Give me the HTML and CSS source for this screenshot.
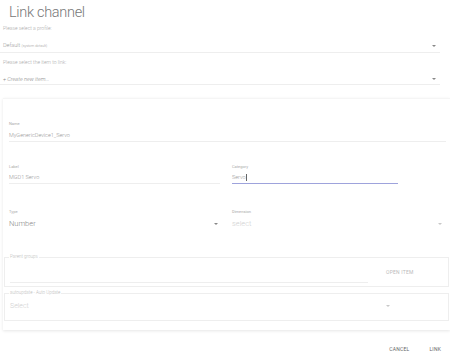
FILE: index.html
```html
<!DOCTYPE html>
<html>
<head>
  <meta charset="UTF-8">
  <title>Link channel</title>
  <link rel="stylesheet" href="styles.css">
</head>
<body>
  <div class="page">
    <h1 class="title">Link channel</h1>

    <div class="hint">Please select a profile:</div>
    <div class="select select-profile">
      <span class="select-value">Default <small>(system default)</small></span>
      <span class="arrow"></span>
    </div>

    <div class="hint hint-item">Please select the item to link:</div>
    <div class="select select-item">
      <span class="select-value create">+ Create new item...</span>
      <span class="arrow"></span>
    </div>

    <!-- New item form -->
    <div class="card">
      <div class="row row-name">
        <div class="field field-full">
          <div class="field-label">Name</div>
          <div class="field-value">MyGenericDevice1_Servo</div>
        </div>
      </div>

      <div class="row row-two row-label">
        <div class="field">
          <div class="field-label">Label</div>
          <div class="field-value">MGD1 Servo</div>
        </div>
        <div class="field field-focused">
          <div class="field-label">Category</div>
          <div class="field-value">Servo<span class="caret"></span></div>
        </div>
      </div>

      <div class="row row-two row-type">
        <div class="field field-plain">
          <div class="field-label">Type</div>
          <div class="field-value big">Number <span class="arrow"></span></div>
        </div>
        <div class="field field-plain">
          <div class="field-label">Dimension</div>
          <div class="field-value big muted">select <span class="arrow light"></span></div>
        </div>
      </div>

      <fieldset class="box box-groups">
        <legend>Parent groups</legend>
        <div class="box-content">
          <div class="groups-input"></div>
          <button class="text-button open-item">OPEN ITEM</button>
        </div>
      </fieldset>

      <fieldset class="box box-update">
        <legend>autoupdate - Auto Update</legend>
        <div class="update-select">
          <span>Select</span>
          <span class="arrow light"></span>
        </div>
      </fieldset>
    </div>

    <div class="actions">
      <button class="text-button action">CANCEL</button>
      <button class="text-button action">LINK</button>
    </div>
  </div>
</body>
</html>
```

FILE: styles.css
```css
body {
  margin: 0;
  font-family: Roboto, "Liberation Sans", sans-serif;
  font-weight: 300;
  color: #999;
  background-color: #fff;
}

.page {
  display: flex;
  flex-direction: column;
  width: 450px;
}

.title {
  margin: 0;
  padding: 2px 0 0 9px;
  height: 22px;
  font-size: 14.5px;
  line-height: 22px;
  font-weight: 300;
  letter-spacing: -0.3px;
  color: #777;
}

.hint {
  padding-left: 3px;
  font-size: 5px;
  line-height: 8px;
  height: 8px;
  color: #aaa;
}

.hint-item {
  margin-top: 5px;
}

.select {
  display: flex;
  align-items: center;
  justify-content: space-between;
  width: 440px;
  box-sizing: border-box;
  padding: 9px 4px 2px 3px;
  border-bottom: 1px solid #eee;
}

.select-item {
  padding-bottom: 1px;
}

.select-value {
  font-size: 5.5px;
  line-height: 8px;
  color: #999;
}

.select-value small {
  font-size: 3.6px;
}

.create {
  font-style: italic;
  color: #888;
}

.arrow {
  display: inline-block;
  width: 0;
  height: 0;
  border-left: 2px solid transparent;
  border-right: 2px solid transparent;
  border-top: 2px solid #888;
}

.arrow.light {
  border-top-color: #c8c8c8;
}

/* Card */
.card {
  margin: 13px 0 0 3px;
  width: 447px;
  padding-bottom: 9px;
  background-color: #fff;
  border-top: 1px solid #f5f5f5;
  box-shadow: 0 1px 3px rgba(0, 0, 0, 0.1);
}

.row {
  padding: 0 4px 0 6px;
}

.row-two {
  display: grid;
  grid-template-columns: 211px 1fr;
  column-gap: 12px;
}

.row-name {
  padding-top: 21px;
}

.row-label {
  padding-top: 21px;
}

.row-type {
  padding-top: 24px;
}

.field {
  display: flex;
  flex-direction: column;
  border-bottom: 1px solid #eee;
  padding-bottom: 2px;
}

.field-focused {
  width: 166px;
  border-bottom-color: #9ea3dc;
}

.field-plain {
  border-bottom: none;
  padding-bottom: 0;
}

.field-label {
  font-size: 4px;
  line-height: 8px;
  font-weight: 400;
  color: #aaa;
}

.field-value {
  margin-top: 3px;
  font-size: 5.5px;
  line-height: 8px;
  color: #999;
  display: flex;
  align-items: center;
}

.row-label .field-value {
  margin-top: 2px;
}

.field-value.big {
  margin-top: 3px;
  font-size: 7.5px;
  line-height: 10px;
  color: #888;
  justify-content: space-between;
  padding-right: 2px;
}

.field-value.muted {
  color: #d0d0d0;
  padding-right: 4px;
}

.caret {
  display: inline-block;
  width: 1px;
  height: 7px;
  margin-left: 0.5px;
  background-color: #666;
}

/* Outlined boxes */
.box {
  margin: 25px 1px 0 1px;
  padding: 0 0 3px 0;
  border: 1px solid #eee;
  min-width: 0;
}

.box legend {
  margin-left: 4px;
  padding: 0 1px;
  font-size: 4.5px;
  line-height: 6px;
  color: #bbb;
}

.box-content {
  display: flex;
  align-items: flex-start;
  padding: 0 5px;
}

.groups-input {
  width: 358px;
  height: 22px;
  border-bottom: 1px solid #eee;
}

.text-button {
  padding: 0;
  border: none;
  background: none;
  font-family: inherit;
  font-size: 5px;
  line-height: 8px;
  font-weight: 400;
  letter-spacing: 0.2px;
  cursor: pointer;
}

.open-item {
  margin: 8px 0 0 18px;
  color: #bbb;
}

.box-update {
  margin-top: 3px;
  padding-bottom: 10px;
}

.update-select {
  display: flex;
  align-items: center;
  justify-content: space-between;
  width: 380px;
  padding: 6px 0 0 5px;
  font-size: 7px;
  line-height: 8px;
  color: #d0d0d0;
}

.actions {
  display: flex;
  justify-content: flex-end;
  gap: 20px;
  margin-top: 15px;
  padding-right: 9px;
}

.action {
  color: #666;
}
```
